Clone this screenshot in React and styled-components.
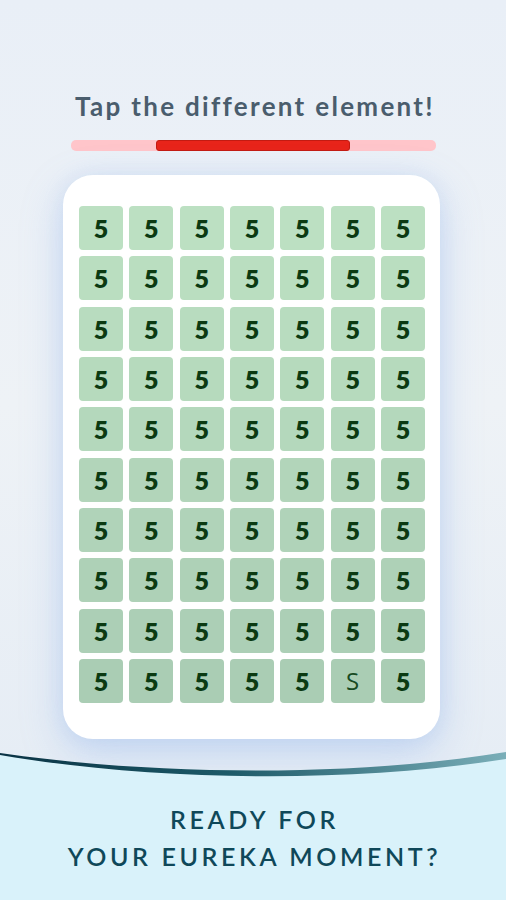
import React from 'react'
import styled, { createGlobalStyle } from 'styled-components'

const ROWS = 10
const COLS = 7
const ODD = { row: 9, col: 5 }

const GlobalStyle = createGlobalStyle`
  html, body {
    margin: 0;
    padding: 0;
    background: #eef2f6;
  }
  * {
    box-sizing: border-box;
  }
`

const App = () => {
  const cells = []
  for (let r = 0; r < ROWS; r++) {
    for (let c = 0; c < COLS; c++) {
      const odd = r === ODD.row && c === ODD.col
      cells.push(
        <Cell key={`${r}-${c}`} $row={r} $odd={odd}>
          {odd ? 'S' : '5'}
        </Cell>
      )
    }
  }

  return (
    <Page>
      <GlobalStyle />
      <Top>
        <Title>Tap the different element!</Title>
        <Track>
          <Fill $start={85} $width={194} />
        </Track>
        <Card>
          <Grid>{cells}</Grid>
        </Card>
      </Top>
      <Wave viewBox="0 0 506 40" preserveAspectRatio="none">
        <defs>
          <linearGradient id="waveLine" x1="0" y1="0" x2="1" y2="0">
            <stop offset="0" stopColor="#0a3344" />
            <stop offset="0.45" stopColor="#1d5a68" />
            <stop offset="1" stopColor="#7aaeb8" />
          </linearGradient>
        </defs>
        <path
          d="M0 9 C150 31 350 34 506 8 L506 40 L0 40 Z"
          fill="#d9f2fa"
        />
        <path
          d="M0 8 C150 30 350 33 506 7 L506 14 C350 39 150 36 0 10 Z"
          fill="url(#waveLine)"
        />
      </Wave>
      <Footer>
        <Slogan>
          READY FOR
          <br />
          YOUR EUREKA MOMENT?
        </Slogan>
      </Footer>
    </Page>
  )
}

const Page = styled.div`
  width: 506px;
  height: 900px;
  overflow: hidden;
  display: flex;
  flex-direction: column;
  background: linear-gradient(
    180deg,
    #e9eff7 0%,
    #eef2f6 45%,
    #e6edf5 85%,
    #dfe8f4 100%
  );
  font-family: Lato, 'Open Sans', sans-serif;
`

const Top = styled.div`
  display: flex;
  flex-direction: column;
  align-items: center;
  padding-top: 91px;
`

const Title = styled.h1`
  margin: 0;
  font-size: 26px;
  line-height: 30px;
  font-weight: 700;
  letter-spacing: 2.3px;
  color: #4a5d6d;
  padding-left: 4px;
`

const Track = styled.div`
  margin-top: 19px;
  width: 365px;
  height: 11px;
  border-radius: 5px;
  background: #ffc5ca;
  display: flex;
  align-items: center;
`

const Fill = styled.div`
  margin-left: ${(p) => p.$start}px;
  width: ${(p) => p.$width}px;
  height: 11px;
  border-radius: 3px;
  background: #e8241a;
  border: 1px solid #c31b12;
`

const Card = styled.div`
  margin-top: 24px;
  margin-left: -3px;
  width: 377px;
  height: 564px;
  background: #ffffff;
  border-radius: 30px;
  padding: 31px 16px 0 16px;
  box-shadow: 0 14px 40px rgba(130, 170, 235, 0.35),
    0 0 20px rgba(160, 190, 240, 0.2);
`

const Grid = styled.div`
  display: grid;
  grid-template-columns: repeat(7, 44px);
  grid-auto-rows: 44px;
  gap: 6.33px;
`

const mix = (row) => {
  const t = row / (ROWS - 1)
  const a = [188, 224, 194]
  const b = [170, 205, 180]
  const c = a.map((v, i) => Math.round(v + (b[i] - v) * t))
  return `rgb(${c.join(',')})`
}

const Cell = styled.div`
  display: flex;
  align-items: center;
  justify-content: center;
  border-radius: 4px;
  background: ${(p) => mix(p.$row)};
  color: ${(p) => (p.$odd ? '#174a22' : '#0b3a12')};
  font-family: ${(p) => (p.$odd ? "'Open Sans', sans-serif" : 'Lato, sans-serif')};
  font-size: ${(p) => (p.$odd ? '24px' : '25px')};
  font-weight: ${(p) => (p.$odd ? 400 : 800)};
  line-height: 1;
  padding-top: 1px;
`

const Wave = styled.svg`
  display: block;
  width: 506px;
  height: 40px;
  margin-top: 6px;
  flex-shrink: 0;
`

const Footer = styled.div`
  flex: 1;
  background: #d9f2fa;
  padding-top: 16px;
  display: flex;
  justify-content: center;
`

const Slogan = styled.p`
  margin: 0;
  text-align: center;
  font-size: 25px;
  line-height: 37px;
  font-weight: 600;
  letter-spacing: 3.6px;
  color: #0f4859;
  padding-left: 3px;
`

export default App
